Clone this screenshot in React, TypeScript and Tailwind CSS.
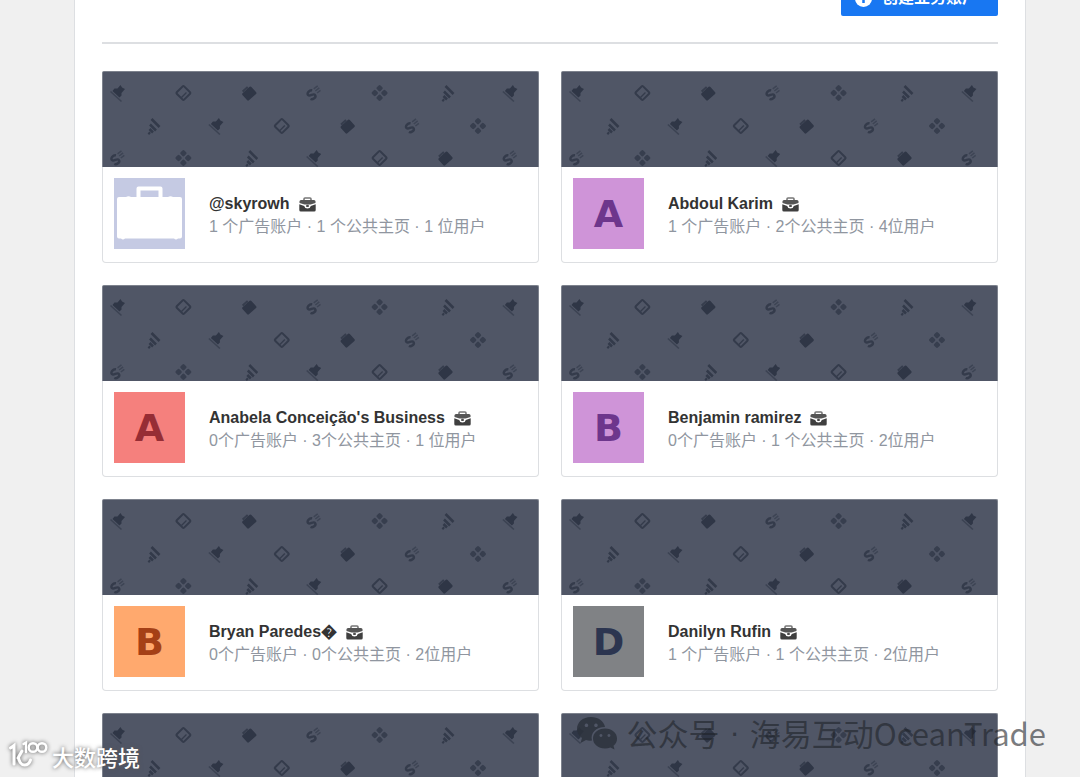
import React from "react";

type Business = {
  name: string;
  meta: string;
  letter?: string;
  tone: string;
};

const businesses: Business[] = [
  { name: "@skyrowh", meta: "1 个广告账户 · 1 个公共主页 · 1 位用户", tone: "bg-[#c5cae3] text-white" },
  { name: "Abdoul Karim", meta: "1 个广告账户 · 2个公共主页 · 4位用户", letter: "A", tone: "bg-[#cf94d8] text-[#6d368c]" },
  { name: "Anabela Conceição's Business", meta: "0个广告账户 · 3个公共主页 · 1 位用户", letter: "A", tone: "bg-[#f5807d] text-[#962d35]" },
  { name: "Benjamin ramirez", meta: "0个广告账户 · 1 个公共主页 · 2位用户", letter: "B", tone: "bg-[#cf94d8] text-[#6d368c]" },
  { name: "Bryan Paredes\uFFFD", meta: "0个广告账户 · 0个公共主页 · 2位用户", letter: "B", tone: "bg-[#ffa96e] text-[#a54016]" },
  { name: "Danilyn Rufin", meta: "1 个广告账户 · 1 个公共主页 · 2位用户", letter: "D", tone: "bg-[#808285] text-[#2c3550]" },
];

const glyphs: Record<string, React.ReactNode> = {
  flag: (
    <g>
      <path d="M-7.500 -1.500 L3.500 8.500" stroke="#373e4e" strokeWidth="1.600" opacity="0.8" />
      <path d="M-5.500 -2 L-3.500 -4.500 L-.5 -4.500 L2.500 -8 L4 -5.500 L7 -4 L3.500 0 L3.500 2.500 L1.500 4.500 Z" fill="#2f3646" />
    </g>
  ),
  page: (
    <g transform="rotate(45)" fill="none" stroke="#343b4b">
      <rect x="-5.200" y="-5.200" width="10.400" height="10.400" rx="1" strokeWidth="2" />
      <path d="M1.800 -2.500 V4.500" strokeWidth="1.300" />
    </g>
  ),
  bag: (
    <g transform="rotate(-42)">
      <rect x="-6" y="-4" width="12" height="9.500" rx="1.200" fill="#2f3646" />
      <path d="M-3 -4 V-5.500 H2.500 V-4" fill="#3b4252" stroke="#363d4d" strokeWidth="1.300" />
    </g>
  ),
  money: (
    <g transform="rotate(-38) scale(1.1)">
      <path d="M0 -3 C-1.500 -4.800 -6 -4.300 -5.500 -1.800 C-5 .3 -.3 -.5 -.5 2 C-.7 4.500 -5 4.200 -6 2.200" fill="none" stroke="#343b4b" strokeWidth="2.200" />
      <path d="M2 -3.200 H6.500 M2 -.8 H6.500 M2 1.600 H6" stroke="#3d4454" strokeWidth="1.300" />
    </g>
  ),
  dots: (
    <g transform="rotate(45)" fill="#373e4e">
      <rect x="-6" y="-6" width="5.200" height="5.200" rx="1.300" />
      <rect x=".8" y="-6" width="5.200" height="5.200" rx="1.300" />
      <rect x="-6" y=".8" width="5.200" height="5.200" rx="1.300" />
      <rect x=".8" y=".8" width="5.200" height="5.200" rx="1.300" />
    </g>
  ),
  bars: (
    <path d="M-2.500 6.500 L-1 8 M-1.500 3 L2 6.500 M-1 -1.500 L5 4.500 M.5 -7 L8.500 1" stroke="#333a4a" strokeWidth="2.500" />
  ),
};

const order = ["flag", "page", "bag", "money", "dots", "bars"];

const scatter = [
  { y: 21, x: 15, start: 0, count: 7 },
  { y: 54, x: 48, start: 5, count: 6 },
  { y: 86, x: 15, start: 3, count: 7 },
];

function Banner() {
  return (
    <div className="h-24 overflow-hidden rounded-t-xs border border-b-0 border-[#7d828d] bg-[#505666]">
      <svg width="460" height="95" aria-hidden="true" className="block max-w-none">
        {scatter.map((row) =>
          Array.from({ length: row.count }, (_, i) => (
            <g key={`${row.y}-${i}`} transform={`translate(${row.x + i * 65.4} ${row.y})`}>
              {glyphs[order[(row.start + i) % 6]]}
            </g>
          )),
        )}
      </svg>
    </div>
  );
}

function Briefcase() {
  return (
    <svg width="17" height="15" viewBox="0 0 17 15" aria-hidden="true" className="mt-px shrink-0">
      <path d="M5 3.500 V2 Q5 1 6 1 H11 Q12 1 12 2 V3.500" fill="none" stroke="#777" strokeWidth="1.600" />
      <path d="M2 3 H15 Q16.500 3 16.500 4.600 V6 L11.500 7.600 H5.500 L.5 6 V4.600 Q.5 3 2 3Z" fill="#555" />
      <path d="M.3 7.200 L5.200 9 Q5.800 11.500 8.500 11.500 Q11.200 11.500 11.800 9 L16.700 7.200 V13 Q16.700 14.500 15.200 14.500 H1.800 Q.3 14.500 .3 13Z" fill="#3f3f3f" />
      <rect x="7.200" y="7.800" width="2.600" height="2.200" rx=".6" fill="#4b4b4b" />
    </svg>
  );
}

function Suitcase() {
  return (
    <svg width="71" height="71" viewBox="0 0 71 71" aria-hidden="true">
      <path d="M24.500 20 V10.500 H46.500 V20" fill="none" stroke="#fff" strokeWidth="4" strokeLinejoin="round" />
      <path d="M5 19 H12 Q14.500 17.500 17 19 H54 Q56.500 17.500 59 19 H66 Q68 19 68 21 V58.500 Q68 60.500 66 60.500 H64 Q62 62.500 60 60.500 H11 Q9 62.500 7 60.500 H5 Q3 60.500 3 58.500 V21 Q3 19 5 19Z" fill="#fff" />
    </svg>
  );
}

function Card({ item }: { item: Business }) {
  return (
    <article className="min-w-0">
      <Banner />
      <div className="flex gap-6 rounded-b border border-t-0 border-[#dddfe2] px-[11px] pt-[11px] pb-[13px]">
        <div className={`flex size-[71px] shrink-0 items-center justify-center font-['DejaVu_Sans',sans-serif] text-[38px] leading-none font-bold ${item.tone}`}>
          {item.letter ?? <Suitcase />}
        </div>
        <div className="min-w-0 pt-[15px]">
          <h2 className="flex items-center gap-[9px] text-base leading-[22px] font-bold text-[#333]">
            {item.name}
            <Briefcase />
          </h2>
          <p className="text-base leading-[23px] text-[#9096a0]">{item.meta}</p>
        </div>
      </div>
    </article>
  );
}

export default function App() {
  return (
    <div className="relative h-screen overflow-hidden bg-[#f0f0f0] font-['Liberation_Sans','Noto_Sans_CJK_SC',sans-serif]">
      <main className="mr-[54px] ml-[74px] border-x border-[#dddfe2] bg-white px-[27px]">
        <header className="-mt-5 flex justify-end border-b-2 border-[#dddfe2] pb-[26px]">
          <button type="button" className="flex h-9 items-center gap-[10px] rounded-xs bg-[#1877f2] pr-5 pl-[14px] text-base font-bold text-white">
            <svg width="17" height="17" viewBox="0 0 17 17" aria-hidden="true">
              <circle cx="8.500" cy="8.500" r="8.500" fill="#fff" />
              <path d="M8.500 4 V13 M4 8.500 H13" stroke="#1877f2" strokeWidth="2.500" />
            </svg>
            创建业务账户
          </button>
        </header>
        <section className="grid grid-cols-2 gap-[22px] pt-[27px]">
          {businesses.map((item) => (
            <Card key={item.name} item={item} />
          ))}
          <Banner />
          <Banner />
        </section>
      </main>

      <div className="absolute right-[34px] bottom-6 flex items-center gap-2 font-['Noto_Sans_CJK_SC',sans-serif] text-[31px] leading-10 text-[#1f2328]/60">
        <svg width="42" height="34" viewBox="0 0 42 34" aria-hidden="true">
          <path fillRule="evenodd" fill="#2c313c" fillOpacity=".85" d="M15 1 C6.500 1 1 6.500 1 13 C1 17 3 20 6 22 L4.500 27 L10 24 Q13 25 16 24.500 C14 17 20 11 29 11 C28 5 22 1 15 1Z M10.500 7.500 a1.800 1.800 0 1 1 -.1 0Z M20 7.500 a1.800 1.800 0 1 1 -.1 0Z" />
          <path fillRule="evenodd" fill="#2c313c" fillOpacity=".85" d="M29 12.500 C22 12.500 17 17 17 22.500 C17 28 22 32.500 29 32.500 Q32 32.500 34.500 31.500 L38.500 33.500 L37.500 29.800 C40 28 41 25.500 41 22.500 C41 17 36 12.500 29 12.500Z M25 18 a1.500 1.500 0 1 1 -.1 0Z M33 18 a1.500 1.500 0 1 1 -.1 0Z" />
        </svg>
        <p className="flex gap-[10px]">
          <span>公众号</span>
          <span className="font-['Liberation_Sans',sans-serif]">·</span>
          <span>海易互动OceanTrade</span>
        </p>
      </div>

      <div className="absolute bottom-2 left-[9px] flex items-center gap-1 font-['Noto_Sans_CJK_SC',sans-serif] text-[22px] leading-[26px] font-medium text-white text-shadow-[0_0_4px_#555]">
        <svg width="39" height="28" viewBox="0 0 39 28" fill="none" stroke="#fff" strokeWidth="3" strokeLinecap="round" aria-hidden="true" className="-mt-1 drop-shadow-[0_0_2px_#555]">
          <path d="M1.500 8 L5 5.500 V24" />
          <path d="M13 11 L9 18 M9.500 17 C9.500 21 12 25 15.500 25 Q20 25 21.500 20" />
          <path d="M14.500 4 L17 2.500 V12" strokeWidth="2.400" />
          <circle cx="24" cy="7.500" r="4.300" strokeWidth="2.400" />
          <circle cx="33" cy="7.500" r="4.300" strokeWidth="2.400" />
        </svg>
        <span>大数跨境</span>
      </div>
    </div>
  );
}
